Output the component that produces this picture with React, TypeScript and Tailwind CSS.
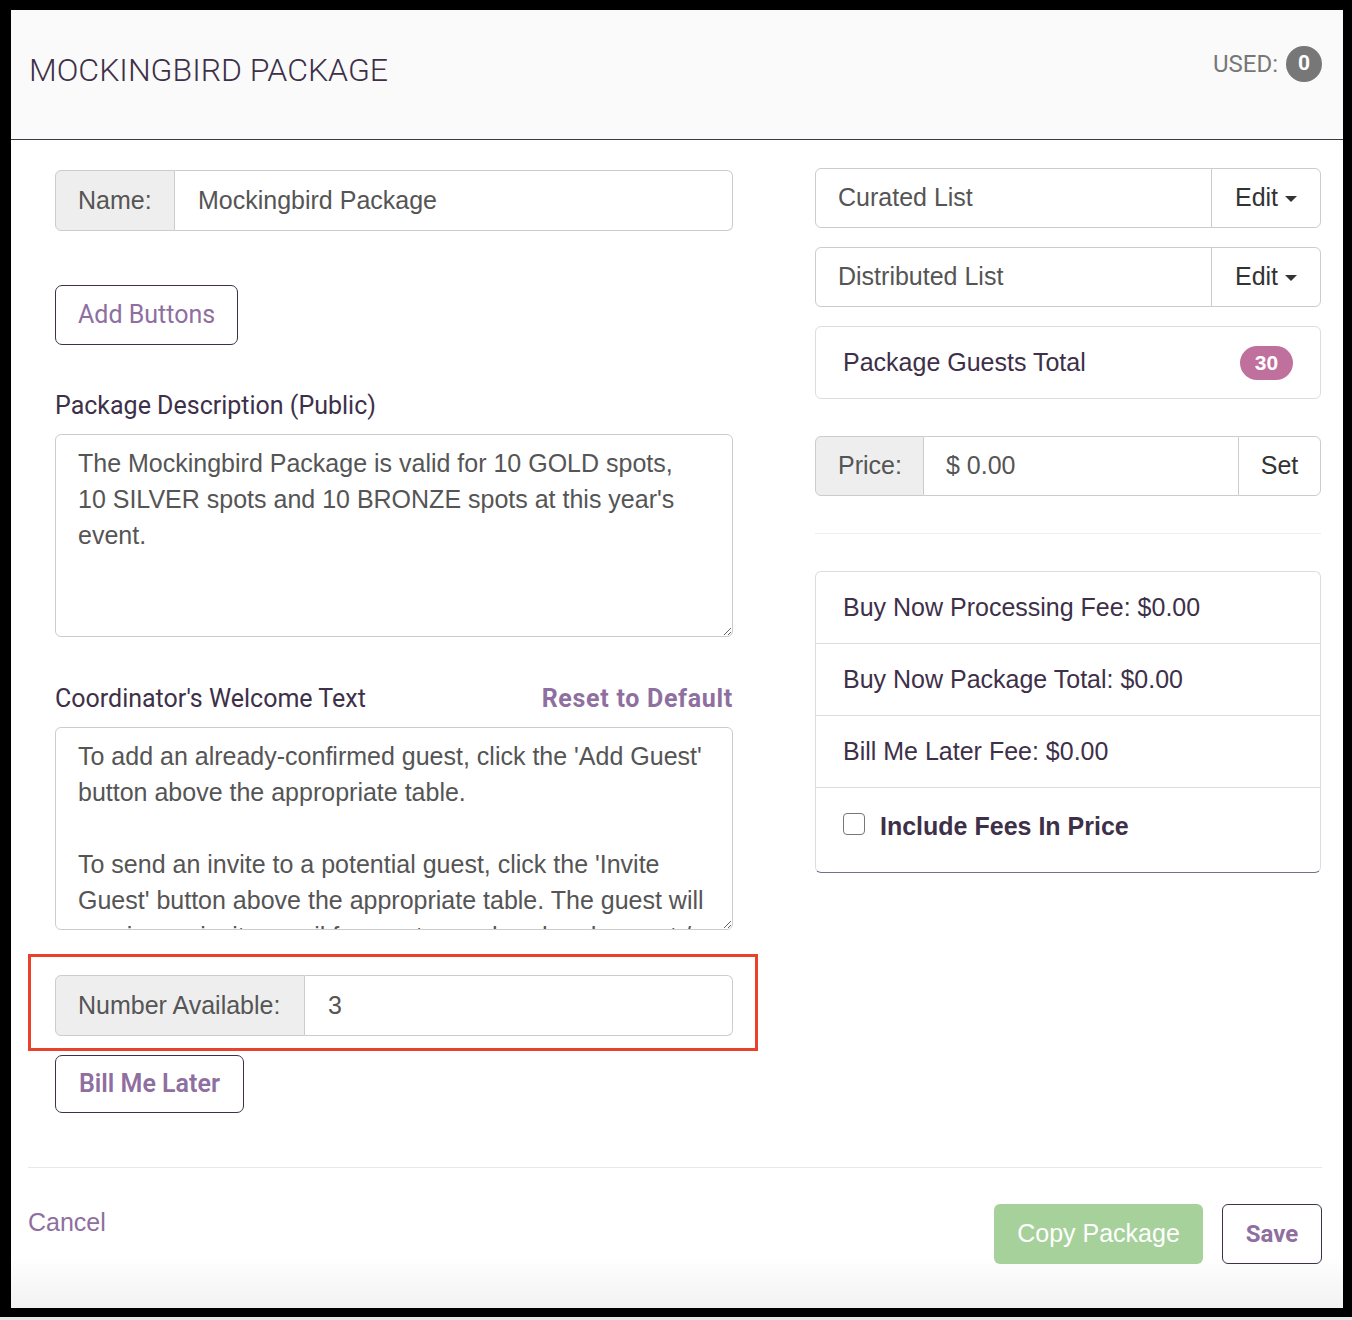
import React from "react";

const sans = "font-['Liberation_Sans',Arial,sans-serif]";
const roboto = "font-['Roboto',sans-serif]";

function Caret() {
  return (
    <svg width="12" height="7" viewBox="0 0 12 7" className="ml-[7px] mt-[2px]">
      <path d="M0 0 L12 0 L6 6 Z" fill="#333" />
    </svg>
  );
}

function ListPicker({ label }: { label: string }) {
  return (
    <div className="flex h-[60px] rounded-[6px] border border-[#ccc]">
      <div className={`${sans} flex flex-1 items-center px-[22px] text-[25px] text-[#555]`}>{label}</div>
      <button className={`${sans} flex w-[109px] items-center justify-center border-l border-[#ccc] text-[25px] text-[#333]`}>
        Edit
        <Caret />
      </button>
    </div>
  );
}

function AddonInput({ label, value, addonWidth }: { label: string; value: string; addonWidth: string }) {
  return (
    <div className={`${sans} flex h-[61px] text-[25px]`}>
      <div className={`${addonWidth} flex items-center rounded-l-[6px] border border-[#ccc] bg-[#eee] px-[22px] text-[#555]`}>
        {label}
      </div>
      <div className="flex flex-1 items-center rounded-r-[6px] border border-l-0 border-[#ccc] px-[23px] text-[#555]">
        {value}
      </div>
    </div>
  );
}

const description =
  "The Mockingbird Package is valid for 10 GOLD spots, 10 SILVER spots and 10 BRONZE spots at this year's event.";

const welcome =
  "To add an already-confirmed guest, click the 'Add Guest' button above the appropriate table.\n\nTo send an invite to a potential guest, click the 'Invite Guest' button above the appropriate table. The guest will receive an invite email for you to go ahead and accept / decline.";

export default function App() {
  return (
    <div className="flex h-[1320px] w-[1352px] flex-col bg-black">
      <div className="mx-[9px] ml-[11px] mt-[10px] flex h-[1298px] flex-col bg-[linear-gradient(to_bottom,#ffffff_96%,#f2f2f2)]">
        {/* header */}
        <div className="flex h-[130px] items-start justify-between border-b border-[#3f3a45] bg-[#fafafa] pl-[18px] pr-[21px] pt-[36px]">
          <h1 className={`${roboto} mt-[4px] text-[32px] font-light leading-[40px] text-[#3d3048]`}>
            MOCKINGBIRD PACKAGE
          </h1>
          <div className="flex items-center gap-[8px]">
            <span className={`${roboto} text-[24px] text-[#777]`}>USED:</span>
            <span className={`${roboto} flex h-[36px] w-[36px] items-center justify-center rounded-full bg-[#777] text-[21px] font-bold text-white`}>
              0
            </span>
          </div>
        </div>

        {/* body */}
        <div className="flex flex-1 flex-col pl-[17px] pr-[21px]">
          <div className="flex">
            {/* left column */}
            <div className="flex w-[705px] flex-col pl-[27px]">
              <div className="mt-[30px]">
                <AddonInput label="Name:" value="Mockingbird Package" addonWidth="w-[120px]" />
              </div>
              <div className="mt-[54px]">
                <button className={`${roboto} h-[60px] rounded-[7px] border border-[#3d3048] px-[22px] text-[25px] text-[#8e6fa0]`}>
                  Add Buttons
                </button>
              </div>
              <label className={`${roboto} mt-[43px] text-[25px] leading-[36px] text-[#3d3048]`}>
                Package Description (Public)
              </label>
              <textarea
                readOnly
                value={description}
                className={`${sans} mt-[10px] h-[203px] w-full overflow-hidden rounded-[6px] border border-[#ccc] pl-[22px] pr-[26px] pt-[10px] text-[25px] leading-[36px] text-[#555] outline-none`}
              />
              <div className="mt-[44px] flex items-center justify-between leading-[36px]">
                <span className={`${roboto} text-[25px] text-[#3d3048]`}>Coordinator's Welcome Text</span>
                <span className={`${roboto} text-[25px] font-bold tracking-[0.7px] text-[#8e6fa0]`}>Reset to Default</span>
              </div>
              <textarea
                readOnly
                value={welcome}
                className={`${sans} mt-[10px] h-[203px] w-full overflow-hidden rounded-[6px] border border-[#ccc] pl-[22px] pr-[26px] pt-[10px] text-[25px] leading-[36px] text-[#555] outline-none`}
              />
              <div className="ml-[-27px] mt-[24px] w-[730px] border-[3px] border-[#e8412c] pb-[12px] pl-[24px] pr-[22px] pt-[18px]">
                <AddonInput label="Number Available:" value="3" addonWidth="w-[250px]" />
              </div>
              <div className="mt-[4px]">
                <button className={`${roboto} h-[58px] rounded-[7px] border border-[#3d3048] px-[23px] text-[25px] font-semibold text-[#8e6fa0]`}>
                  Bill Me Later
                </button>
              </div>
            </div>

            {/* right column */}
            <div className="ml-[82px] flex w-[506px] flex-col">
              <div className="mt-[28px]">
                <ListPicker label="Curated List" />
              </div>
              <div className="mt-[19px]">
                <ListPicker label="Distributed List" />
              </div>
              <div className={`${sans} mt-[19px] flex h-[73px] items-center justify-between rounded-[6px] border border-[#ddd] pl-[27px] pr-[27px] text-[25px] text-[#3d3048]`}>
                <span>Package Guests Total</span>
                <span className="flex h-[34px] w-[53px] items-center justify-center rounded-full bg-[#c0709c] text-[21px] font-bold text-white">
                  30
                </span>
              </div>
              <div className={`${sans} mt-[37px] flex h-[60px] text-[25px]`}>
                <div className="flex w-[109px] items-center rounded-l-[6px] border border-[#ccc] bg-[#eee] px-[22px] text-[#555]">
                  Price:
                </div>
                <div className="flex flex-1 items-center border-y border-[#ccc] px-[22px] text-[#555]">$ 0.00</div>
                <div className="flex w-[83px] items-center justify-center rounded-r-[6px] border border-[#ccc] text-[#333]">
                  Set
                </div>
              </div>
              <hr className="mt-[37px] border-t border-[#eee]" />
              <div className={`${sans} mt-[37px] flex flex-col rounded-[6px] border border-[#ddd] border-b-[#7d6d8c] text-[25px] text-[#3d3048]`}>
                <div className="flex h-[72px] items-center border-b border-[#ddd] px-[27px]">Buy Now Processing Fee: $0.00</div>
                <div className="flex h-[72px] items-center border-b border-[#ddd] px-[27px]">Buy Now Package Total: $0.00</div>
                <div className="flex h-[72px] items-center border-b border-[#ddd] px-[27px]">Bill Me Later Fee: $0.00</div>
                <div className="flex h-[84px] items-start px-[27px] pt-[23px]">
                  <span className="mt-[2px] h-[22px] w-[22px] rounded-[4px] border border-[#777] bg-white" />
                  <span className="ml-[15px] font-bold leading-[30px]">Include Fees In Price</span>
                </div>
              </div>
            </div>
          </div>

          {/* footer */}
          <div className="mt-[54px] flex flex-1 items-start justify-between border-t border-[#e8e8e8] pt-[36px]">
            <span className={`${sans} text-[25px] leading-[36px] text-[#8e6fa0]`}>Cancel</span>
            <div className="flex gap-[19px]">
              <button className={`${sans} h-[60px] w-[209px] rounded-[6px] bg-[#a6d19b] text-[25px] text-white`}>
                Copy Package
              </button>
              <button className={`${roboto} h-[60px] w-[100px] rounded-[6px] border border-[#3d3048] text-[24px] font-bold text-[#8e6fa0]`}>
                Save
              </button>
            </div>
          </div>
        </div>
      </div>
      <div className="mt-auto h-[3px] w-full bg-[#e6e6e6]" />
    </div>
  );
}
